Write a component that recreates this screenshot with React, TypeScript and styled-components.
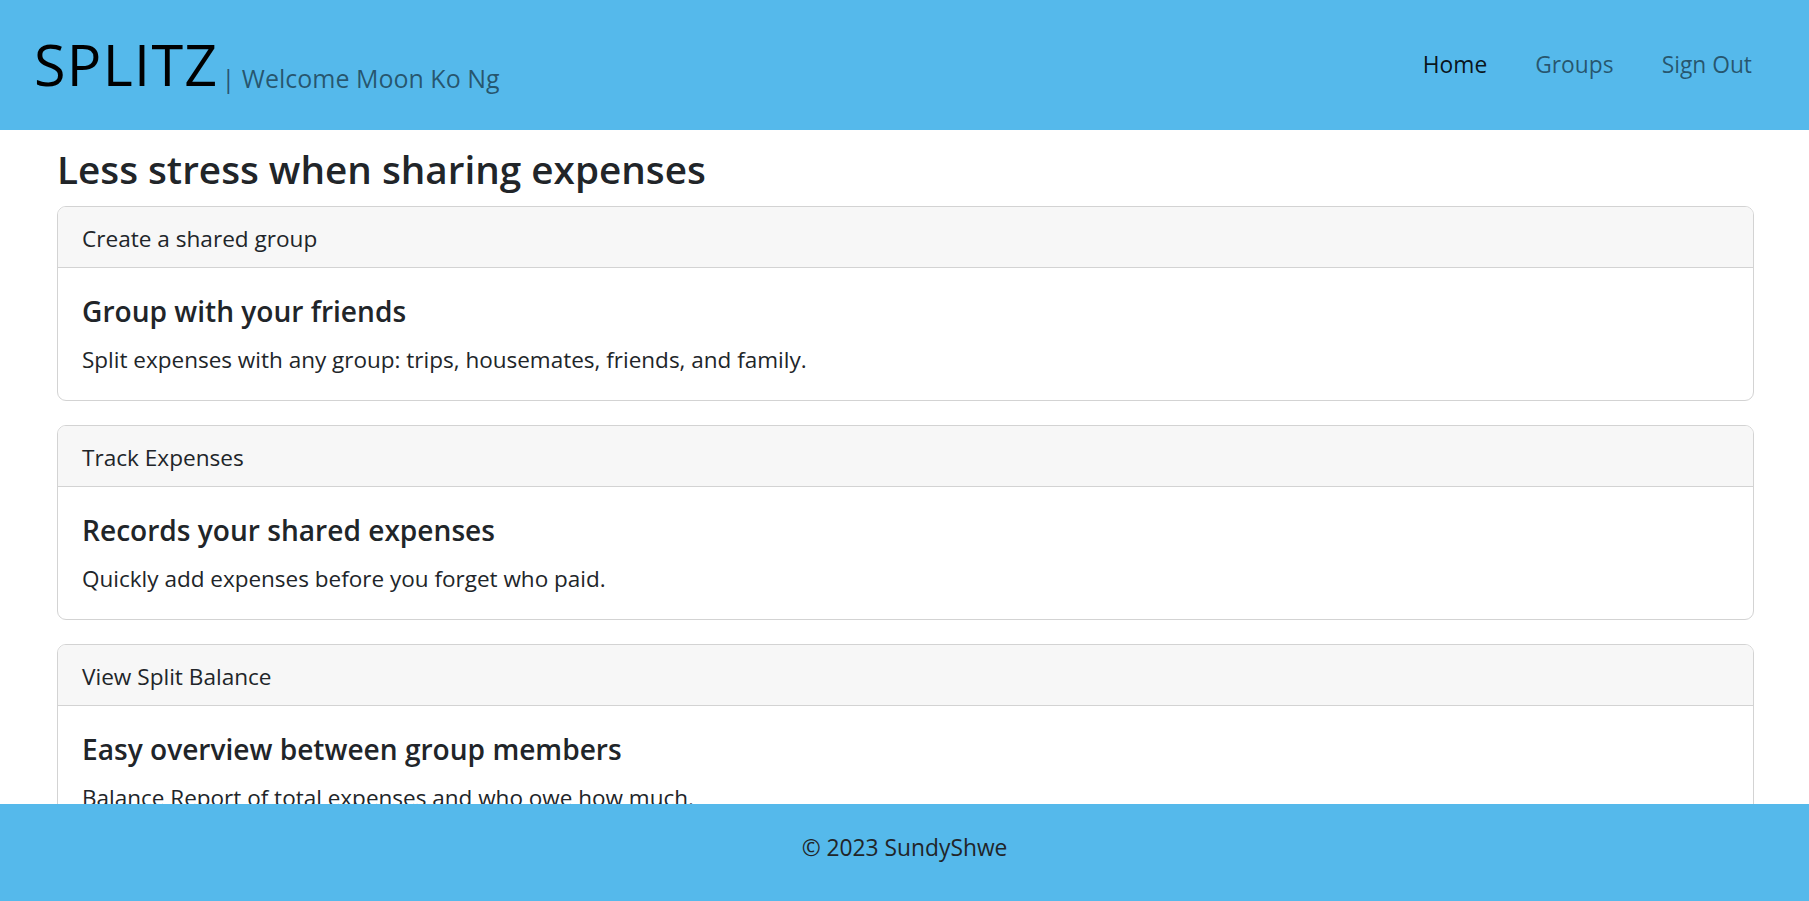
import React from "react";
import styled, { createGlobalStyle } from "styled-components";

const GlobalStyle = createGlobalStyle`
  html, body { margin: 0; padding: 0; }
  body {
    font-family: "Open Sans", "Noto Sans", sans-serif;
    font-size: 22.6px;
    line-height: 36px;
    color: #212529;
    background: #ffffff;
  }
  * { box-sizing: border-box; }
`;

const BLUE = "#55b9eb";

const Navbar = styled.header`
  height: 130px;
  background: ${BLUE};
  display: flex;
  align-items: flex-start;
  justify-content: space-between;
  padding: 0 33px 0 34px;
`;

const Brand = styled.div`
  display: flex;
  align-items: flex-start;
  margin-top: 35px;
`;

const Logo = styled.span`
  font-size: 57.5px;
  line-height: 58px;
  letter-spacing: 1.3px;
  color: #000;
`;

const Welcome = styled.span`
  font-size: 25px;
  line-height: 28px;
  margin-top: 29px;
  margin-left: 3px;
  color: rgba(0, 0, 0, 0.55);
`;

const NavList = styled.nav`
  display: flex;
  margin-top: 47px;
`;

const NavLink = styled.a<{ $active?: boolean }>`
  padding: 0 24px;
  font-size: 22.8px;
  line-height: 36px;
  text-decoration: none;
  color: ${(p) => (p.$active ? "rgba(0,0,0,0.9)" : "rgba(0,0,0,0.55)")};
  cursor: pointer;
`;

const Main = styled.main`
  margin: 0 55px 0 57px;
`;

const Title = styled.h3`
  margin: 14px 0 12px;
  font-size: 38.7px;
  line-height: 50px;
  font-weight: 600;
`;

const Card = styled.section`
  border: 1px solid #d3d3d3;
  border-radius: 9px;
  margin-bottom: 24px;
  overflow: hidden;
`;

const CardHeader = styled.div`
  padding: 14px 24px 10px;
  background: #f7f7f7;
  border-bottom: 1px solid #d3d3d3;
  line-height: 36px;
`;

const CardBody = styled.div`
  padding: 24px 24px 22px;
`;

const CardTitle = styled.h5`
  margin: 0 0 9px;
  padding-top: 1px;
  font-size: 28.1px;
  line-height: 36px;
  font-weight: 600;
`;

const CardText = styled.p`
  margin: 0;
  padding-top: 4px;
  font-size: 22.5px;
  line-height: 36px;
`;

const Footer = styled.footer`
  position: fixed;
  left: 0;
  right: 0;
  bottom: 0;
  height: 97px;
  background: ${BLUE};
  text-align: center;
  padding-top: 26px;
  font-size: 22.8px;
  color: #212529;
`;

const features = [
  {
    header: "Create a shared group",
    title: "Group with your friends",
    text: "Split expenses with any group: trips, housemates, friends, and family.",
  },
  {
    header: "Track Expenses",
    title: "Records your shared expenses",
    text: "Quickly add expenses before you forget who paid.",
  },
  {
    header: "View Split Balance",
    title: "Easy overview between group members",
    text: "Balance Report of total expenses and who owe how much.",
  },
];

export default function App() {
  return (
    <>
      <GlobalStyle />
      <Navbar>
        <Brand>
          <Logo>SPLITZ</Logo>
          <Welcome>| Welcome Moon Ko Ng</Welcome>
        </Brand>
        <NavList>
          <NavLink $active>Home</NavLink>
          <NavLink>Groups</NavLink>
          <NavLink>Sign Out</NavLink>
        </NavList>
      </Navbar>
      <Main>
        <Title>Less stress when sharing expenses</Title>
        {features.map((f) => (
          <Card key={f.header}>
            <CardHeader>{f.header}</CardHeader>
            <CardBody>
              <CardTitle>{f.title}</CardTitle>
              <CardText>{f.text}</CardText>
            </CardBody>
          </Card>
        ))}
      </Main>
      <Footer>© 2023 SundyShwe</Footer>
    </>
  );
}
